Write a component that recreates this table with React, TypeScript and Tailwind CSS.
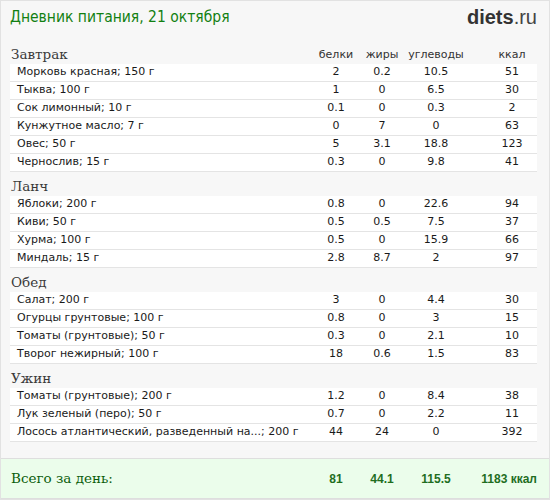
import React from "react";

type Item = { name: string; p: string; f: string; c: string; k: string };
type Section = { title: string; items: Item[] };

const data: Section[] = [
  {
    title: "Завтрак",
    items: [
      { name: "Морковь красная; 150 г", p: "2", f: "0.2", c: "10.5", k: "51" },
      { name: "Тыква; 100 г", p: "1", f: "0", c: "6.5", k: "30" },
      { name: "Сок лимонный; 10 г", p: "0.1", f: "0", c: "0.3", k: "2" },
      { name: "Кунжутное масло; 7 г", p: "0", f: "7", c: "0", k: "63" },
      { name: "Овес; 50 г", p: "5", f: "3.1", c: "18.8", k: "123" },
      { name: "Чернослив; 15 г", p: "0.3", f: "0", c: "9.8", k: "41" },
    ],
  },
  {
    title: "Ланч",
    items: [
      { name: "Яблоки; 200 г", p: "0.8", f: "0", c: "22.6", k: "94" },
      { name: "Киви; 50 г", p: "0.5", f: "0.5", c: "7.5", k: "37" },
      { name: "Хурма; 100 г", p: "0.5", f: "0", c: "15.9", k: "66" },
      { name: "Миндаль; 15 г", p: "2.8", f: "8.7", c: "2", k: "97" },
    ],
  },
  {
    title: "Обед",
    items: [
      { name: "Салат; 200 г", p: "3", f: "0", c: "4.4", k: "30" },
      { name: "Огурцы грунтовые; 100 г", p: "0.8", f: "0", c: "3", k: "15" },
      { name: "Томаты (грунтовые); 50 г", p: "0.3", f: "0", c: "2.1", k: "10" },
      { name: "Творог нежирный; 100 г", p: "18", f: "0.6", c: "1.5", k: "83" },
    ],
  },
  {
    title: "Ужин",
    items: [
      { name: "Томаты (грунтовые); 200 г", p: "1.2", f: "0", c: "8.4", k: "38" },
      { name: "Лук зеленый (перо); 50 г", p: "0.7", f: "0", c: "2.2", k: "11" },
      { name: "Лосось атлантический, разведенный на...; 200 г", p: "44", f: "24", c: "0", k: "392" },
    ],
  },
];

const sans = { fontFamily: '"DejaVu Sans", Verdana, sans-serif' };
const serif = { fontFamily: '"DejaVu Serif", Georgia, serif' };

export default function App() {
  return (
    <div className="w-[550px] h-[500px] border border-[#e2e2e2] bg-[#f7f7f7] flex flex-col overflow-hidden">
      <div className="h-[39px] flex items-start justify-between pl-[9px] pr-[12px] pt-[5px]">
        <div
          className="text-[15.5px] leading-[22px] text-[#128012]"
          style={{ fontFamily: '"DejaVu Sans Condensed", "Liberation Sans", sans-serif', fontStretch: "condensed" }}
        >
          Дневник питания, 21 октября
        </div>
        <div className="text-[20px] leading-[24px] mt-[-1px]" style={{ fontFamily: '"Liberation Sans", Arial, sans-serif' }}>
          <span className="font-bold text-[#333]">diets</span>
          <span className="text-[#444]">.ru</span>
        </div>
      </div>
      <div className="flex flex-col pl-[9px] pr-[12px]">
        {data.map((s, si) => (
          <div key={s.title} className="flex flex-col">
            <div className="h-[24px] flex items-end">
              <div className="flex-1 pl-[1px] text-[13.5px] leading-[19px] text-[#3a3a3a]" style={serif}>
                {s.title}
              </div>
              {si === 0 && (
                <div className="flex text-[11px] leading-[19px] text-[#333]" style={sans}>
                  <div className="w-[46px] text-center">белки</div>
                  <div className="w-[46px] text-center">жиры</div>
                  <div className="w-[62px] text-center">углеводы</div>
                  <div className="w-[50px] ml-[20px] text-center">ккал</div>
                </div>
              )}
            </div>
            {s.items.map((it) => (
              <div
                key={it.name}
                className="h-[18px] flex items-center bg-white border-b border-[#e4e4e4] text-[11px] text-[#1a1a1a]"
                style={sans}
              >
                <div className="flex-1 pl-[7px] whitespace-nowrap">{it.name}</div>
                <div className="w-[46px] text-center">{it.p}</div>
                <div className="w-[46px] text-center">{it.f}</div>
                <div className="w-[62px] text-center">{it.c}</div>
                <div className="w-[50px] ml-[20px] text-center">{it.k}</div>
              </div>
            ))}
          </div>
        ))}
      </div>
      <div className="mt-[16px] h-[41px] border-y border-[#dedede] bg-[#ebfdeb] flex items-center pl-[10px] pr-[12px]">
        <div className="flex-1 text-[13.5px] text-[#0c5e0c]" style={serif}>
          Всего за день:
        </div>
        <div
          className="flex items-center font-bold text-[12px] text-[#1f6e1f]"
          style={{ fontFamily: '"Liberation Sans", Arial, sans-serif' }}
        >
          <div className="w-[46px] text-center">81</div>
          <div className="w-[46px] text-center">44.1</div>
          <div className="w-[62px] text-center">115.5</div>
          <div className="w-[70px] text-right">1183 ккал</div>
        </div>
      </div>
    </div>
  );
}
